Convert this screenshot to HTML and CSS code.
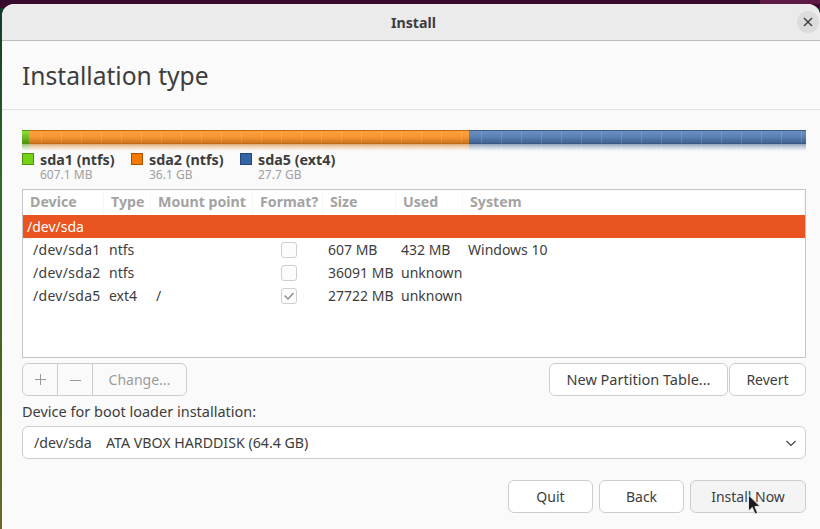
FILE: index.html
```html
<!DOCTYPE html>
<html lang="en">
<head>
<meta charset="utf-8">
<title>Install</title>
<link rel="stylesheet" href="styles.css">
</head>
<body>
<div class="desktop">
  <main class="window">
    <header class="titlebar">
      <span class="title">Install</span>
      <button class="close" aria-label="Close">
        <svg width="12" height="12" viewBox="0 0 12 12"><path d="M2 2l8 8M10 2l-8 8" stroke="#3d3d3d" stroke-width="1.4" fill="none"/></svg>
      </button>
    </header>
    <div class="page-head"><h1>Installation type</h1></div>
    <section class="content">
      <div class="bar">
        <div class="seg seg-green"></div>
        <div class="seg seg-orange"></div>
        <div class="seg seg-blue"></div>
      </div>
      <div class="legend">
        <div class="lg lg-1"><i class="sw sw-green"></i><div class="lg-text"><b>sda1 (ntfs)</b><small>607.1 MB</small></div></div>
        <div class="lg lg-2"><i class="sw sw-orange"></i><div class="lg-text"><b>sda2 (ntfs)</b><small>36.1 GB</small></div></div>
        <div class="lg lg-3"><i class="sw sw-blue"></i><div class="lg-text"><b>sda5 (ext4)</b><small>27.7 GB</small></div></div>
      </div>
      <div class="table">
        <div class="row head">
          <span>Device</span><span>Type</span><span>Mount point</span><span>Format?</span><span>Size</span><span>Used</span><span>System</span>
        </div>
        <div class="row disk"><span>/dev/sda</span></div>
        <div class="row part">
          <span>/dev/sda1</span><span>ntfs</span><span></span><span class="fmt"><i class="cb"></i></span><span>607 MB</span><span>432 MB</span><span>Windows 10</span>
        </div>
        <div class="row part">
          <span>/dev/sda2</span><span>ntfs</span><span></span><span class="fmt"><i class="cb"></i></span><span>36091 MB</span><span>unknown</span><span></span>
        </div>
        <div class="row part">
          <span>/dev/sda5</span><span>ext4</span><span>/</span><span class="fmt"><i class="cb"><svg width="14" height="14" viewBox="0 0 14 14"><path d="M2.500 6.500l3.500 3.500 5.500-6" stroke="#8e8e8e" stroke-width="1.4" fill="none"/></svg></i></span><span>27722 MB</span><span>unknown</span><span></span>
        </div>
      </div>
      <div class="tools">
        <div class="group">
          <button class="gbtn icon"><svg width="13" height="13" viewBox="0 0 13 13"><path d="M6.500 1v11M1 6.500h11" stroke="#9a9a9a" stroke-width="1" fill="none"/></svg></button>
          <button class="gbtn icon"><svg width="13" height="13" viewBox="0 0 13 13"><path d="M1 7.500h11" stroke="#9a9a9a" stroke-width="1" fill="none"/></svg></button>
          <button class="gbtn change">Change...</button>
        </div>
        <div class="right">
          <button class="btn npt">New Partition Table...</button>
          <button class="btn revert">Revert</button>
        </div>
      </div>
      <label class="boot-label">Device for boot loader installation:</label>
      <div class="combo">
        <span class="dev">/dev/sda</span><span>ATA VBOX HARDDISK (64.4 GB)</span>
        <svg class="chev" width="12" height="8" viewBox="0 0 12 8"><path d="M1.500 2l4.500 4.500L10.500 2" stroke="#3d3d3d" stroke-width="1.100" fill="none"/></svg>
      </div>
      <div class="actions">
        <button class="btn quit">Quit</button>
        <button class="btn back">Back</button>
        <button class="btn install">Install Now</button>
      </div>
    </section>
  </main>
  <svg class="cursor" width="14" height="22" viewBox="0 0 14 22"><path d="M1.500 1v16l3.800-3.500 2.700 6.500 2.600-1.100-2.700-6.300 5-.4z" fill="#1c1c1c" stroke="#e8e8e8" stroke-width="1"/></svg>
</div>
</body>
</html>
```
FILE: styles.css
```css
* { box-sizing: border-box; }
html, body { margin: 0; height: 100%; overflow: hidden; }
body { font-family: "Noto Sans", sans-serif; font-size: 14px; color: #3d3d3d; }
.desktop {
  position: relative;
  width: 820px;
  height: 529px;
  padding: 4px 0 0 2px;
  background:
    linear-gradient(90deg, transparent 760px, #5e1a45 760px) 0 0 / 100% 4px no-repeat,
    linear-gradient(180deg, #3a0a2c 0, #3a0a2c 8px, transparent 8px),
    linear-gradient(180deg, #12362a 0, #2f6a24 180px, #46661e 350px, #6a6a20 529px);
  overflow: hidden;
}
.window {
  width: 818px;
  height: 525px;
  background: #fafafa;
  border-radius: 12px 12px 0 0;
  display: flex;
  flex-direction: column;
}
.titlebar {
  height: 37px;
  flex: none;
  background: #ebebeb;
  border-bottom: 1px solid #bdbdbd;
  border-radius: 12px 12px 0 0;
  display: flex;
  align-items: center;
  justify-content: center;
  padding-left: 5px;
  position: relative;
}
.title { font-weight: 700; font-size: 14.200px; }
.close {
  position: absolute;
  right: 1px;
  top: 7px;
  width: 22px;
  height: 22px;
  border: 0;
  padding: 0;
  border-radius: 50%;
  background: #dcdcdc;
  display: flex;
  align-items: center;
  justify-content: center;
}
.page-head {
  height: 69px;
  flex: none;
  border-bottom: 1px solid #e2e2e2;
  padding: 1px 0 0 20px;
  display: flex;
  align-items: center;
}
h1 { margin: 0; font-size: 24.600px; font-weight: 400; line-height: 32px; }
.content { padding: 20px 14px 0 20px; display: flex; flex-direction: column; }
.bar {
  position: relative;
  height: 14px;
  display: flex;
  -webkit-box-reflect: below 0 linear-gradient(180deg, rgba(0,0,0,0) 50%, rgba(0,0,0,.55));
}
.bar::after {
  content: "";
  position: absolute;
  inset: 1px 0;
  background: repeating-linear-gradient(90deg, transparent 0, transparent 19px, rgba(255,255,255,.14) 19px, rgba(255,255,255,.14) 20px);
}
.seg { height: 14px; border-style: solid; border-width: 1px 0; }
.seg-green { width: 7px; border-color: #4f9412 #2c5c08; background: linear-gradient(180deg, #8fdc3c, #6cb525 60%, #4f9412); }
.seg-orange { width: 440px; border-color: #c56a10 #6b3a06; background: linear-gradient(180deg, #ff9f3d, #f79632 50%, #c9771f); }
.seg-blue { width: 337px; border-color: #3a5a85 #1f3650; background: linear-gradient(180deg, #6a8fbf, #5a80b2 50%, #3f6390); }
.legend { height: 36px; margin-top: 9px; display: flex; }
.lg { display: flex; gap: 6px; }
.lg-1 { width: 109px; }
.lg-2 { width: 109px; }
.lg-text { margin-top: -1px; }
.sw { width: 12px; height: 12px; flex: none; border: 1px solid #4a4a4a; }
.sw-green { background: #73d216; border-color: #4e8f10; }
.sw-orange { background: #f57900; border-color: #a85300; }
.sw-blue { background: #3465a4; border-color: #24477a; }
.lg b { display: block; font-size: 14.300px; line-height: 15px; font-weight: 700; }
.lg small { display: block; font-size: 12px; line-height: 15px; color: #a0a0a0; }
.table {
  height: 169px;
  border: 1px solid #c4c4c4;
  background: #fff;
  font-size: 14px;
}
.row {
  display: grid;
  grid-template-columns: 81px 47px 102px 70px 73px 67px 1fr;
}
.head { height: 25px; align-items: center; color: #a3a3a3; font-weight: 700; font-size: 14.200px; }
.head span { padding-left: 7px; height: 25px; line-height: 24px; border-right: 1px solid #f7f7f7; white-space: nowrap; }
.disk { height: 23px; background: #e95420; color: #fff; align-items: center; }
.disk span { padding-left: 4px; grid-column: 1 / -1; }
.part { height: 23px; align-items: center; }
.part span { padding-left: 5px; white-space: nowrap; }
.part span:first-child { padding-left: 10px; letter-spacing: .3px; }
.fmt { display: flex; justify-content: center; padding-left: 0 !important; margin-left: 2px; }
.cb {
  width: 16px;
  height: 16px;
  border: 1px solid #cfcfcf;
  border-radius: 3px;
  background: #fcfcfc;
  display: flex;
  align-items: center;
  justify-content: center;
}
.tools { margin-top: 5px; height: 33px; display: flex; justify-content: space-between; }
.group { display: flex; width: 165px; border: 1px solid #cdcdcd; border-radius: 6px; background: #fafafa; }
.gbtn { border: 0; border-right: 1px solid #cdcdcd; background: transparent; padding: 0; font: inherit; color: #9c9c9c; }
.gbtn.icon { width: 35px; display: flex; align-items: center; justify-content: center; }
.gbtn.change { border-right: 0; flex: 1; padding-bottom: 1px; }
.right { display: flex; gap: 1px; }
.btn {
  height: 33px;
  border: 1px solid #cdcdcd;
  border-radius: 6px;
  background: #fff;
  font: inherit;
  color: #3d3d3d;
  padding: 0 0 1px;
}
.npt { width: 179px; font-size: 14.500px; }
.revert { width: 77px; }
.boot-label { margin-top: 5px; line-height: 20px; font-size: 14.500px; }
.combo {
  margin-top: 5px;
  height: 33px;
  border: 1px solid #cdcdcd;
  border-radius: 6px;
  background: #fff;
  display: flex;
  align-items: center;
  padding-left: 11px;
  position: relative;
  font-size: 14.200px;
}
.dev { width: 72px; }
.chev { position: absolute; right: 8px; top: 12px; }
.actions { margin-top: 21px; display: flex; justify-content: flex-end; gap: 6px; }
.quit, .back { width: 85px; }
.install { width: 116px; background: #f4f4f4; }
.cursor { position: absolute; left: 747px; top: 494px; }
```
